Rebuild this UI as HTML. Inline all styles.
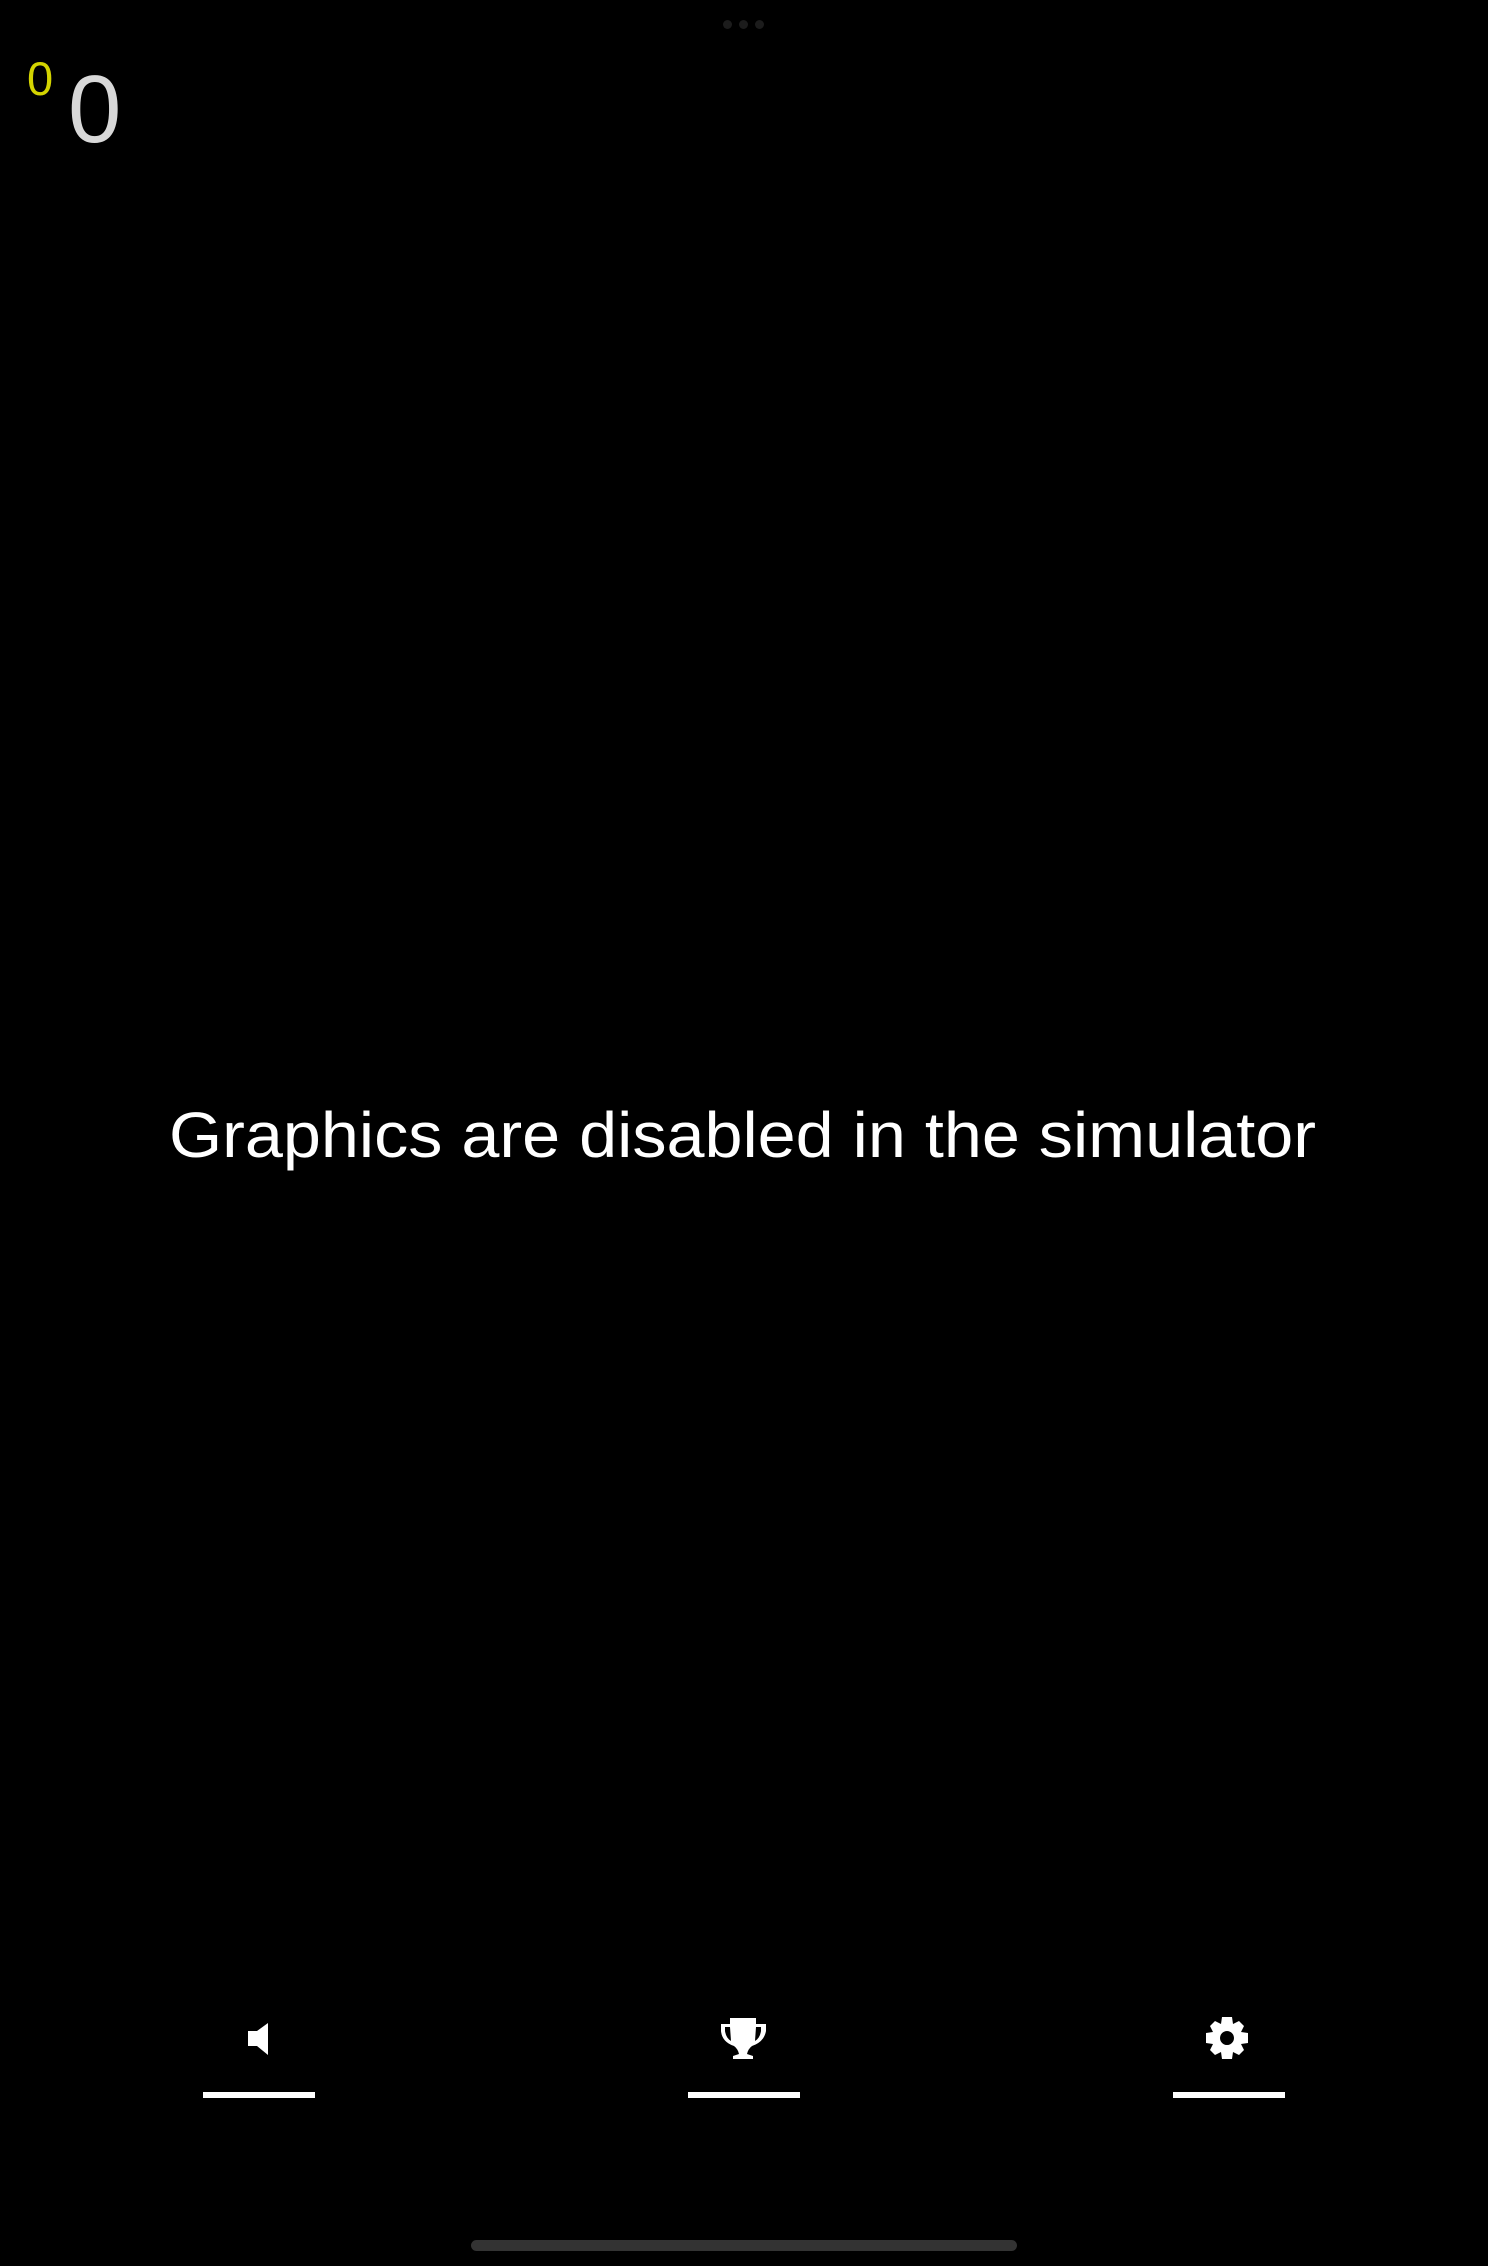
<!DOCTYPE html>
<html><head><meta charset="utf-8"><style>
html,body{margin:0;padding:0;background:#000;width:1488px;height:2266px;overflow:hidden;position:relative;font-family:"Liberation Sans",sans-serif}
.a{position:absolute}
.bar{position:absolute;top:2092px;height:6px;width:112px;background:#fff}
</style></head><body>
<div class="a" style="left:723px;top:20px;width:9px;height:9px;border-radius:50%;background:#1c1c1c"></div>
<div class="a" style="left:739px;top:20px;width:9px;height:9px;border-radius:50%;background:#1c1c1c"></div>
<div class="a" style="left:755px;top:20px;width:9px;height:9px;border-radius:50%;background:#1c1c1c"></div>
<div class="a" style="left:27px;top:50px;font-size:47px;line-height:57px;color:#d4d400">0</div>
<div class="a" style="left:68px;top:55px;font-size:96px;line-height:110px;color:#d8d8d8">0</div>
<svg class="a" style="left:0;top:0" width="1488" height="2266">
<text x="169" y="1157" font-family="Liberation Sans, sans-serif" font-size="64" fill="#fff" textLength="1147" lengthAdjust="spacingAndGlyphs">Graphics are disabled in the simulator</text>
<path d="M248 2031H257L268 2023V2055L257 2046H248Z" fill="#fff"/>
<path d="M730 2018H756V2024H766V2031Q764 2042 752 2046Q748 2049 747 2054L753 2056V2059H733V2056L739 2054Q738 2049 734 2046Q722 2042 721 2031V2024H730ZM725 2027V2031Q726 2038 731 2041L730 2027ZM761 2027H756L755 2041Q760 2038 761 2031Z" fill="#fff" fill-rule="evenodd"/>
<g transform="translate(1227 2038)" fill="#fff">
<path fill-rule="evenodd" d="M-5-21H5L6-14L12-17L17-12L14-6L21-5V5L14 6L17 12L12 17L6 14L5 21H-5L-6 14L-12 17L-17 12L-14 6L-21 5V-5L-14-6L-17-12L-12-17L-6-14Z M0-7A7 7 0 1 0 0.01-7Z"/>
</g>
</svg>
<div class="bar" style="left:203px"></div>
<div class="bar" style="left:688px"></div>
<div class="bar" style="left:1173px"></div>
<div class="a" style="left:471px;top:2240px;width:546px;height:11px;border-radius:6px;background:#333"></div>
</body></html>
